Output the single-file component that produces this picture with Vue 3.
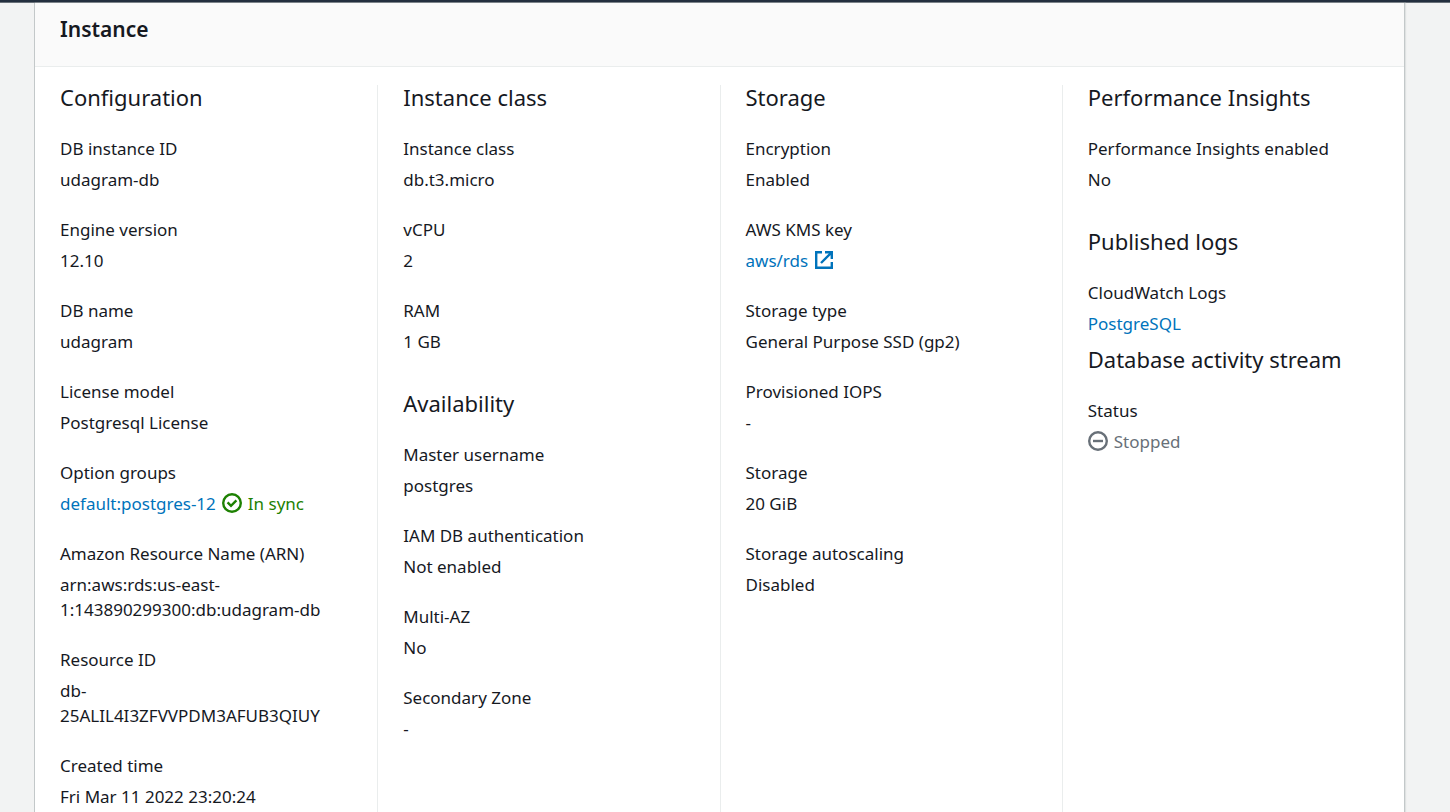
<script setup>
const columns = [
  [
    {
      title: 'Configuration',
      items: [
        { label: 'DB instance ID', value: 'udagram-db' },
        { label: 'Engine version', value: '12.10' },
        { label: 'DB name', value: 'udagram' },
        { label: 'License model', value: 'Postgresql License' },
        { label: 'Option groups', value: 'default:postgres-12', link: true, status: 'In sync' },
        { label: 'Amazon Resource Name (ARN)', value: 'arn:aws:rds:us-east-1:143890299300:db:udagram-db' },
        { label: 'Resource ID', value: 'db-25ALIL4I3ZFVVPDM3AFUB3QIUY' },
        { label: 'Created time', value: 'Fri Mar 11 2022 23:20:24' },
      ],
    },
  ],
  [
    {
      title: 'Instance class',
      items: [
        { label: 'Instance class', value: 'db.t3.micro' },
        { label: 'vCPU', value: '2' },
        { label: 'RAM', value: '1 GB' },
      ],
    },
    {
      title: 'Availability',
      items: [
        { label: 'Master username', value: 'postgres' },
        { label: 'IAM DB authentication', value: 'Not enabled' },
        { label: 'Multi-AZ', value: 'No' },
        { label: 'Secondary Zone', value: '-' },
      ],
    },
  ],
  [
    {
      title: 'Storage',
      items: [
        { label: 'Encryption', value: 'Enabled' },
        { label: 'AWS KMS key', value: 'aws/rds', link: true, external: true },
        { label: 'Storage type', value: 'General Purpose SSD (gp2)' },
        { label: 'Provisioned IOPS', value: '-' },
        { label: 'Storage', value: '20 GiB' },
        { label: 'Storage autoscaling', value: 'Disabled' },
      ],
    },
  ],
  [
    {
      title: 'Performance Insights',
      items: [{ label: 'Performance Insights enabled', value: 'No' }],
    },
    {
      title: 'Published logs',
      items: [{ label: 'CloudWatch Logs', value: 'PostgreSQL', link: true }],
    },
    {
      title: 'Database activity stream',
      tight: true,
      items: [{ label: 'Status', stopped: 'Stopped' }],
    },
  ],
]
</script>

<template>
  <div class="page">
    <div class="topbar"></div>
    <main class="panel">
      <header class="panel-header"><h2>Instance</h2></header>
      <div class="columns">
        <div v-for="(groups, c) in columns" :key="c" class="column">
          <section v-for="group in groups" :key="group.title" class="group" :class="{ tight: group.tight }">
            <h3>{{ group.title }}</h3>
            <dl>
              <div v-for="item in group.items" :key="item.label" class="item">
                <dt>{{ item.label }}</dt>
                <dd>
                  <a v-if="item.link" href="#">{{ item.value }}<svg v-if="item.external" class="icon" viewBox="0 0 20 20" aria-hidden="true"><path d="M8 2.2H2.2v15.6h15.600V12M11 2.200h6.800v6.800M17.500 2.500L7 13" /></svg></a>
                  <template v-else>{{ item.value }}</template>
                  <span v-if="item.status" class="synced"><svg class="icon" viewBox="0 0 20 20" aria-hidden="true"><circle cx="10" cy="10" r="8.800" /><path d="M5.600 9.400l3.400 3.400 5.400-5.400" /></svg>{{ item.status }}</span>
                  <span v-if="item.stopped" class="stopped"><svg class="icon" viewBox="0 0 20 20" aria-hidden="true"><circle cx="10" cy="10" r="8.800" /><path d="M5 10h10" /></svg>{{ item.stopped }}</span>
                </dd>
              </div>
            </dl>
          </section>
        </div>
      </div>
    </main>
  </div>
</template>

<style>
body {
  background: #f2f3f3;
}
</style>

<style scoped>
.page {
  height: 100vh;
  display: flex;
  flex-direction: column;
  overflow: hidden;
  color: #16191f;
  font-family: "Noto Sans", "Open Sans", sans-serif;
  font-size: 17px;
  line-height: 25px;
}
.topbar {
  flex: none;
  height: 2px;
  background: #232f3e;
  border-bottom: 1px solid #687078;
}
.panel {
  flex: 1 0 auto;
  display: flex;
  flex-direction: column;
  margin: 0 45px 0 34px;
  background: #fff;
  border: solid #c3c8c9;
  border-width: 0 1px;
  box-shadow: 1px 0 1px #dfe2e2;
}
.panel-header {
  padding: 11px 25px 22px;
  background: #fafafa;
  border-bottom: 1px solid #eaeded;
}
h2,
h3,
dl,
dd {
  margin: 0;
}
h2 {
  font-size: 21px;
  line-height: 30px;
  font-weight: 600;
}
h3 {
  margin-bottom: 27px;
  font-size: 22px;
  line-height: 24px;
  font-weight: 400;
}
.columns {
  flex: 1;
  display: grid;
  grid-template-columns: repeat(4, minmax(0, 1fr));
  padding-top: 18px;
}
.column {
  padding: 0 40px 0 25px;
}
.column + .column {
  border-left: 1px solid #eaeded;
}
.group + .group {
  margin-top: 37px;
}
.group + .group.tight {
  margin-top: 11px;
}
.item + .item {
  margin-top: 25px;
}
dd {
  margin-top: 6px;
}
a {
  color: #0073bb;
  text-decoration: none;
}
.icon {
  width: 20px;
  height: 20px;
  vertical-align: -3px;
  fill: none;
  stroke: currentColor;
  stroke-width: 2.4;
}
a .icon {
  margin-left: 6px;
}
span .icon {
  margin-right: 6px;
}
.synced {
  margin-left: 6px;
  color: #1d8102;
}
.stopped {
  color: #687078;
}
</style>
